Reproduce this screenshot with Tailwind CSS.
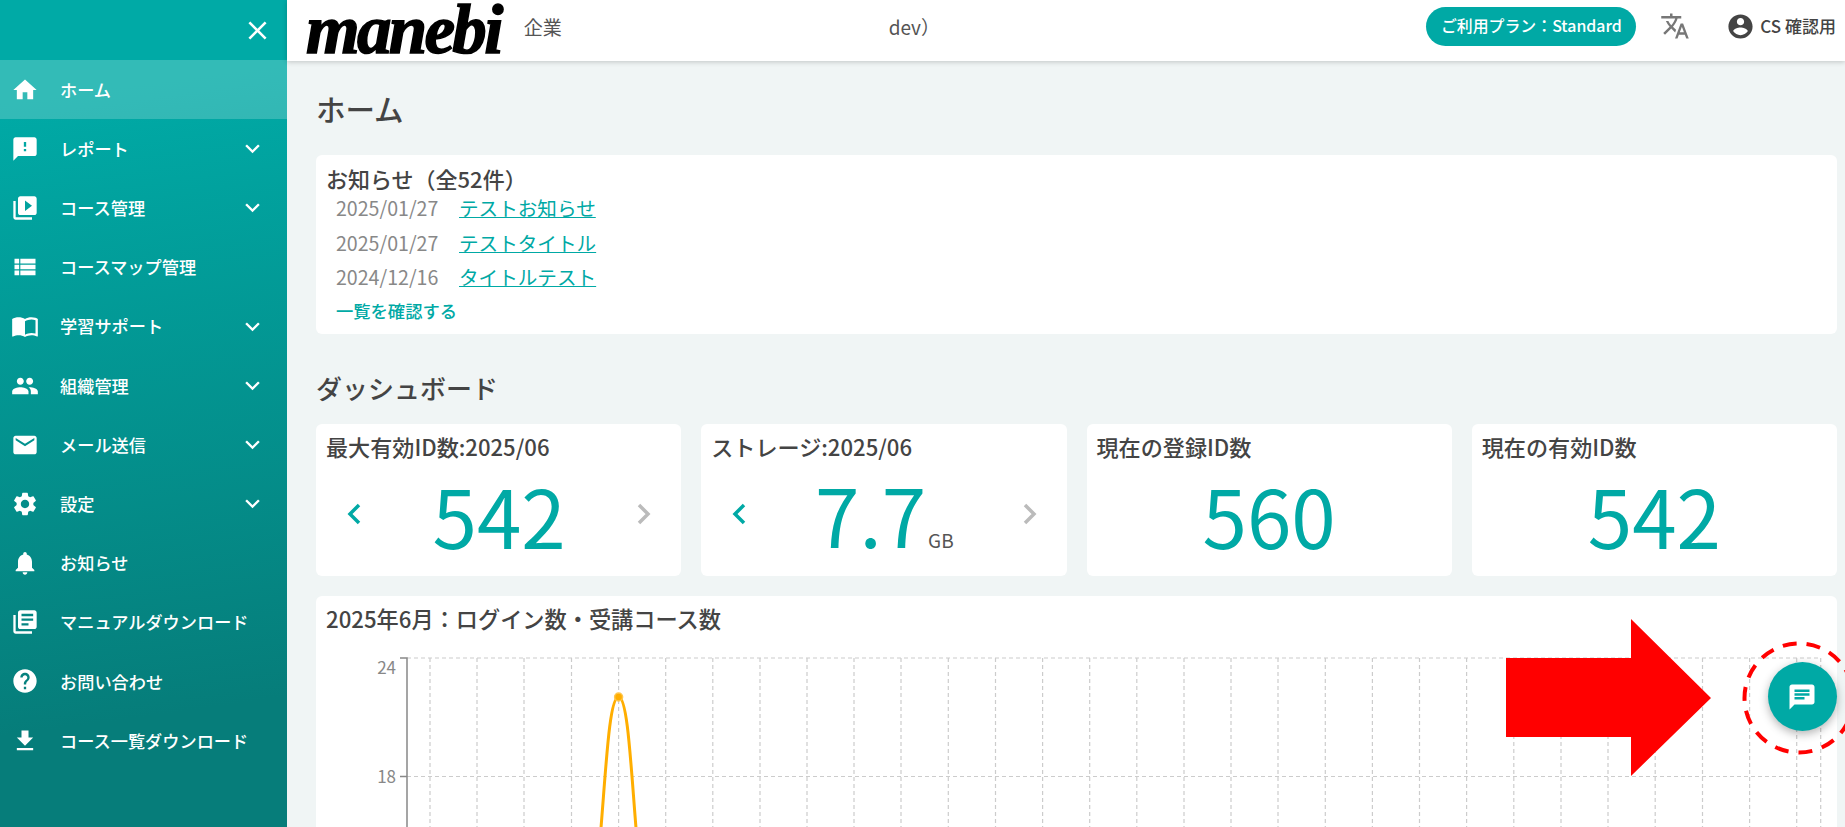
<!DOCTYPE html>
<html lang="ja">
<head>
    <meta charset="UTF-8">
    <title>manebi</title>
    <script src="https://cdn.jsdelivr.net/npm/@tailwindcss/browser@4"></script>
</head>
<body class="font-['Noto_Sans_CJK_JP','Noto_Sans',sans-serif] text-[#444] bg-[#f0f5f5]">
    <div class="flex h-screen overflow-hidden relative">

        <!-- sidebar -->
        <aside class="w-[287px] shrink-0 text-white font-medium text-[17.2px] bg-[linear-gradient(172deg,#00aaa6_12%,#067d7a_85%)]">
            <div class="h-[60px] flex items-center justify-end pr-[14px]">
                <svg class="w-[31px] h-[31px] fill-white" viewBox="0 0 24 24"><path d="M19 6.41L17.59 5 12 10.59 6.41 5 5 6.41 10.59 12 5 17.59 6.41 19 12 13.41 17.59 19 19 17.59 13.41 12 19 6.41z"/></svg>
            </div>
            <nav>
                <a class="flex items-center h-[59.2px] pl-[11px] bg-white/20">
                    <svg class="w-[28px] h-[28px] fill-white mr-[21px]" viewBox="0 0 24 24"><path d="M10 20v-6h4v6h5v-8h3L12 3 2 12h3v8z"/></svg>
                    <span>ホーム</span>
                </a>
                <a class="flex items-center h-[59.2px] pl-[11px]">
                    <svg class="w-[28px] h-[28px] fill-white mr-[21px]" viewBox="0 0 24 24"><path d="M20 2H4c-1.1 0-1.99.9-1.99 2L2 22l4-4h14c1.1 0 2-.9 2-2V4c0-1.1-.9-2-2-2zm-7 12h-2v-2h2v2zm0-4h-2V6h2v4z"/></svg>
                    <span class="flex-1">レポート</span>
                    <svg class="w-[29px] h-[29px] fill-white mr-[20px]" viewBox="0 0 24 24"><path d="M16.59 8.59L12 13.17 7.41 8.59 6 10l6 6 6-6z"/></svg>
                </a>
                <a class="flex items-center h-[59.2px] pl-[11px]">
                    <svg class="w-[28px] h-[28px] fill-white mr-[21px]" viewBox="0 0 24 24"><path d="M4 6H2v14c0 1.1.9 2 2 2h14v-2H4V6zm16-4H8c-1.1 0-2 .9-2 2v12c0 1.1.9 2 2 2h12c1.1 0 2-.9 2-2V4c0-1.1-.9-2-2-2zm-8 12.5v-9l6 4.5-6 4.5z"/></svg>
                    <span class="flex-1">コース管理</span>
                    <svg class="w-[29px] h-[29px] fill-white mr-[20px]" viewBox="0 0 24 24"><path d="M16.59 8.59L12 13.17 7.41 8.59 6 10l6 6 6-6z"/></svg>
                </a>
                <a class="flex items-center h-[59.2px] pl-[11px]">
                    <svg class="w-[28px] h-[28px] fill-white mr-[21px]" viewBox="0 0 24 24"><path d="M3 14h4v-4H3v4zm0 5h4v-4H3v4zM3 9h4V5H3v4zm5 5h13v-4H8v4zm0 5h13v-4H8v4zM8 5v4h13V5H8z"/></svg>
                    <span>コースマップ管理</span>
                </a>
                <a class="flex items-center h-[59.2px] pl-[11px]">
                    <svg class="w-[28px] h-[28px] fill-white mr-[21px]" viewBox="0 0 24 24"><path d="M21 5c-1.11-.35-2.33-.5-3.5-.5-1.95 0-4.05.4-5.5 1.5-1.45-1.1-3.55-1.5-5.5-1.5S2.45 4.9 1 6v14.65c0 .25.25.5.5.5.1 0 .15-.05.25-.05C3.1 20.45 5.05 20 6.5 20c1.95 0 4.05.4 5.5 1.5 1.35-.85 3.8-1.5 5.5-1.5 1.65 0 3.35.3 4.75 1.05.1.05.15.05.25.05.25 0 .5-.25.5-.5V6c-.6-.45-1.25-.75-2-1zm0 13.5c-1.1-.35-2.3-.5-3.5-.5-1.7 0-4.15.65-5.5 1.5V8c1.35-.85 3.8-1.5 5.5-1.5 1.2 0 2.4.15 3.5.5v11.5z"/></svg>
                    <span class="flex-1">学習サポート</span>
                    <svg class="w-[29px] h-[29px] fill-white mr-[20px]" viewBox="0 0 24 24"><path d="M16.59 8.59L12 13.17 7.41 8.59 6 10l6 6 6-6z"/></svg>
                </a>
                <a class="flex items-center h-[59.2px] pl-[11px]">
                    <svg class="w-[28px] h-[28px] fill-white mr-[21px]" viewBox="0 0 24 24"><path d="M16 11c1.66 0 2.99-1.34 2.99-3S17.66 5 16 5c-1.66 0-3 1.34-3 3s1.34 3 3 3zm-8 0c1.66 0 2.99-1.34 2.99-3S9.66 5 8 5C6.34 5 5 6.34 5 8s1.34 3 3 3zm0 2c-2.33 0-7 1.17-7 3.5V19h14v-2.5c0-2.33-4.67-3.5-7-3.5zm8 0c-.29 0-.62.02-.97.05 1.16.84 1.97 1.97 1.97 3.45V19h6v-2.5c0-2.33-4.67-3.5-7-3.5z"/></svg>
                    <span class="flex-1">組織管理</span>
                    <svg class="w-[29px] h-[29px] fill-white mr-[20px]" viewBox="0 0 24 24"><path d="M16.59 8.59L12 13.17 7.41 8.59 6 10l6 6 6-6z"/></svg>
                </a>
                <a class="flex items-center h-[59.2px] pl-[11px]">
                    <svg class="w-[28px] h-[28px] fill-white mr-[21px]" viewBox="0 0 24 24"><path d="M20 4H4c-1.1 0-1.99.9-1.99 2L2 18c0 1.1.9 2 2 2h16c1.1 0 2-.9 2-2V6c0-1.1-.9-2-2-2zm0 4l-8 5-8-5V6l8 5 8-5v2z"/></svg>
                    <span class="flex-1">メール送信</span>
                    <svg class="w-[29px] h-[29px] fill-white mr-[20px]" viewBox="0 0 24 24"><path d="M16.59 8.59L12 13.17 7.41 8.59 6 10l6 6 6-6z"/></svg>
                </a>
                <a class="flex items-center h-[59.2px] pl-[11px]">
                    <svg class="w-[28px] h-[28px] fill-white mr-[21px]" viewBox="0 0 24 24"><path d="M19.14 12.94c.04-.3.06-.61.06-.94 0-.32-.02-.64-.07-.94l2.03-1.58c.18-.14.23-.41.12-.61l-1.92-3.32c-.12-.22-.37-.29-.59-.22l-2.39.96c-.5-.38-1.03-.7-1.62-.94l-.36-2.54c-.04-.24-.24-.41-.48-.41h-3.84c-.24 0-.43.17-.47.41l-.36 2.54c-.59.24-1.13.57-1.62.94l-2.39-.96c-.22-.08-.47 0-.59.22L2.74 8.87c-.12.21-.08.47.12.61l2.03 1.58c-.05.3-.09.63-.09.94s.02.64.07.94l-2.03 1.58c-.18.14-.23.41-.12.61l1.92 3.32c.12.22.37.29.59.22l2.39-.96c.5.38 1.03.7 1.62.94l.36 2.54c.05.24.24.41.48.41h3.84c.24 0 .44-.17.47-.41l.36-2.54c.59-.24 1.13-.56 1.62-.94l2.39.96c.22.08.47 0 .59-.22l1.92-3.32c.12-.22.07-.47-.12-.61l-2.01-1.58zM12 15.6c-1.98 0-3.6-1.62-3.6-3.6s1.62-3.6 3.6-3.6 3.6 1.62 3.6 3.6-1.62 3.6-3.6 3.6z"/></svg>
                    <span class="flex-1">設定</span>
                    <svg class="w-[29px] h-[29px] fill-white mr-[20px]" viewBox="0 0 24 24"><path d="M16.59 8.59L12 13.17 7.41 8.59 6 10l6 6 6-6z"/></svg>
                </a>
                <a class="flex items-center h-[59.2px] pl-[11px]">
                    <svg class="w-[28px] h-[28px] fill-white mr-[21px]" viewBox="0 0 24 24"><path d="M12 22c1.1 0 2-.9 2-2h-4c0 1.1.89 2 2 2zm6-6v-5c0-3.07-1.64-5.64-4.5-6.32V4c0-.83-.67-1.5-1.5-1.5s-1.5.67-1.5 1.5v.68C7.63 5.36 6 7.92 6 11v5l-2 2v1h16v-1l-2-2z"/></svg>
                    <span>お知らせ</span>
                </a>
                <a class="flex items-center h-[59.2px] pl-[11px]">
                    <svg class="w-[28px] h-[28px] fill-white mr-[21px]" viewBox="0 0 24 24"><path d="M4 6H2v14c0 1.1.9 2 2 2h14v-2H4V6zm16-4H8c-1.1 0-2 .9-2 2v12c0 1.1.9 2 2 2h12c1.1 0 2-.9 2-2V4c0-1.1-.9-2-2-2zm-1 9H9V9h10v2zm-4 4H9v-2h6v2zm4-8H9V5h10v2z"/></svg>
                    <span>マニュアルダウンロード</span>
                </a>
                <a class="flex items-center h-[59.2px] pl-[11px]">
                    <svg class="w-[28px] h-[28px] fill-white mr-[21px]" viewBox="0 0 24 24"><path d="M12 2C6.48 2 2 6.48 2 12s4.48 10 10 10 10-4.48 10-10S17.52 2 12 2zm1 17h-2v-2h2v2zm2.07-7.75l-.9.92C13.45 12.9 13 13.5 13 15h-2v-.5c0-1.1.45-2.1 1.17-2.83l1.24-1.26c.37-.36.59-.86.59-1.41 0-1.1-.9-2-2-2s-2 .9-2 2H8c0-2.21 1.79-4 4-4s4 1.79 4 4c0 .88-.36 1.68-.93 2.25z"/></svg>
                    <span>お問い合わせ</span>
                </a>
                <a class="flex items-center h-[59.2px] pl-[11px]">
                    <svg class="w-[28px] h-[28px] fill-white mr-[21px]" viewBox="0 0 24 24"><path d="M19 9h-4V3H9v6H5l7 7 7-7zM5 18v2h14v-2H5z"/></svg>
                    <span>コース一覧ダウンロード</span>
                </a>
            </nav>
        </aside>

        <div class="flex-1 flex flex-col min-w-0">
            <!-- header -->
            <header class="h-[61px] shrink-0 bg-white shadow-[0_1px_5px_rgba(0,0,0,0.2)] flex items-center relative z-10">
                <span class="font-['Liberation_Serif',serif] font-bold italic text-[69px] leading-[58px] tracking-[-2.7px] text-black ml-[19px] -mt-[2px] [-webkit-text-stroke:1.5px_black]">manebi</span>
                <span class="text-[19px] text-[#555] ml-[23px] -mt-[6px]">企業</span>
                <span class="text-[19px] text-[#555] ml-[327px] -mt-[6px]">dev）</span>
                <div class="ml-auto flex items-center -mt-[9px]">
                    <span class="h-[39px] px-[14.5px] rounded-full bg-[#00a9a5] text-white text-[15.9px] font-medium flex items-center">ご利用プラン：Standard</span>
                    <svg class="w-[30px] h-[30px] fill-[#777] ml-[24px]" viewBox="0 0 24 24"><path d="M12.87 15.07l-2.54-2.51.03-.03c1.74-1.94 2.98-4.17 3.71-6.53H17V4h-7V2H8v2H1v1.99h11.17C11.5 7.92 10.44 9.75 9 11.35 8.07 10.32 7.3 9.19 6.69 8h-2c.73 1.63 1.73 3.17 2.98 4.56l-5.09 5.02L4 19l5-5 3.11 3.11.76-2.04zM18.5 10h-2L12 22h2l1.12-3h4.75L21 22h2l-4.5-12zm-2.62 7l1.62-4.33L19.12 17h-3.24z"/></svg>
                    <svg class="w-[29px] h-[29px] fill-[#444] ml-[36px]" viewBox="0 0 24 24"><path d="M12 2C6.48 2 2 6.48 2 12s4.48 10 10 10 10-4.48 10-10S17.52 2 12 2zm0 3c1.66 0 3 1.34 3 3s-1.34 3-3 3-3-1.34-3-3 1.34-3 3-3zm0 14.2c-2.5 0-4.71-1.28-6-3.22.03-1.99 4-3.08 6-3.08 1.99 0 5.97 1.09 6 3.08-1.29 1.94-3.5 3.22-6 3.22z"/></svg>
                    <span class="text-[17px] font-medium text-[#444] ml-[5px] mr-[9px]">CS 確認用</span>
                </div>
            </header>

            <main class="flex-1 overflow-hidden pl-[29px] pr-[8px]">
                <h1 class="text-[29.5px] font-medium leading-[40px] mt-[27px] mb-[27px]">ホーム</h1>

                <section class="bg-white rounded-md h-[179px] pt-[8px] pl-[10px]">
                    <h2 class="text-[22px] font-medium leading-[30px] -mb-[2px]">お知らせ（全52件）</h2>
                    <div class="pl-[10px] text-[19.6px]">
                        <div class="flex h-[34.3px] items-center"><span class="text-[#888] w-[123px]">2025/01/27</span><a class="text-[#00a9a5] underline">テストお知らせ</a></div>
                        <div class="flex h-[34.3px] items-center"><span class="text-[#888] w-[123px]">2025/01/27</span><a class="text-[#00a9a5] underline">テストタイトル</a></div>
                        <div class="flex h-[34.3px] items-center"><span class="text-[#888] w-[123px]">2024/12/16</span><a class="text-[#00a9a5] underline">タイトルテスト</a></div>
                        <a class="block text-[17.3px] font-medium text-[#00a9a5] leading-[24px] mt-[5px]">一覧を確認する</a>
                    </div>
                </section>

                <h2 class="text-[26px] font-medium leading-[36px] mt-[36px] mb-[18px]">ダッシュボード</h2>

                <div class="grid grid-cols-4 gap-[20px]">
                    <div class="bg-white rounded-md h-[152px] pt-[7px]">
                        <h3 class="text-[22.1px] font-medium leading-[30px] pl-[10px]">最大有効ID数:2025/06</h3>
                        <div class="flex items-center justify-between pl-[31px] pr-[30px] h-[100px] mt-[8px]">
                            <svg class="w-[14px] h-[22px] mb-[10px] fill-none stroke-[#00a9a5] stroke-[3.5]" viewBox="0 0 14 22"><path d="M12 2L3 11l9 9"/></svg>
                            <span class="text-[80px] text-[#00a9a5] leading-none mb-[11px]">542</span>
                            <svg class="w-[14px] h-[22px] mb-[10px] fill-none stroke-[#bbb] stroke-[3.5]" viewBox="0 0 14 22"><path d="M2 2l9 9-9 9"/></svg>
                        </div>
                    </div>
                    <div class="bg-white rounded-md h-[152px] pt-[7px]">
                        <h3 class="text-[22.1px] font-medium leading-[30px] pl-[10px]">ストレージ:2025/06</h3>
                        <div class="flex items-center justify-between pl-[31px] pr-[30px] h-[100px] mt-[8px]">
                            <svg class="w-[14px] h-[22px] mb-[10px] fill-none stroke-[#00a9a5] stroke-[3.5]" viewBox="0 0 14 22"><path d="M12 2L3 11l9 9"/></svg>
                            <span class="flex items-baseline mb-[11px]"><span class="text-[80px] text-[#00a9a5] leading-none">7.7</span><span class="text-[19px] text-[#555] ml-[2px]">GB</span></span>
                            <svg class="w-[14px] h-[22px] mb-[10px] fill-none stroke-[#bbb] stroke-[3.5]" viewBox="0 0 14 22"><path d="M2 2l9 9-9 9"/></svg>
                        </div>
                    </div>
                    <div class="bg-white rounded-md h-[152px] pt-[7px]">
                        <h3 class="text-[22.1px] font-medium leading-[30px] pl-[10px]">現在の登録ID数</h3>
                        <div class="flex items-center justify-center h-[100px] mt-[8px]">
                            <span class="text-[80px] text-[#00a9a5] leading-none mb-[11px]">560</span>
                        </div>
                    </div>
                    <div class="bg-white rounded-md h-[152px] pt-[7px]">
                        <h3 class="text-[22.1px] font-medium leading-[30px] pl-[10px]">現在の有効ID数</h3>
                        <div class="flex items-center justify-center h-[100px] mt-[8px]">
                            <span class="text-[80px] text-[#00a9a5] leading-none mb-[11px]">542</span>
                        </div>
                    </div>
                </div>

                <section class="bg-white rounded-t-md mt-[20px] h-[400px] pt-[7px]">
                    <h3 class="text-[22.2px] font-medium leading-[30px] pl-[10px]">2025年6月：ログイン数・受講コース数</h3>
                    <!-- viewBox uses page coordinates so grid values read off the picture directly -->
                    <svg class="block mt-[17px] w-[1521px] h-[200px]" viewBox="316 650 1521 200">
                        <path fill="none" stroke="#ccc" stroke-width="1.2" stroke-dasharray="4 3" d="M407 658H1821M407 776.5H1821M430 658V850M477 658V850M524 658V850M571.5 658V850M618.6 658V850M665.7 658V850M712.8 658V850M760 658V850M807 658V850M854 658V850M901 658V850M948.3 658V850M995.5 658V850M1042.6 658V850M1089.7 658V850M1136.8 658V850M1184 658V850M1231 658V850M1278 658V850M1325.3 658V850M1372.4 658V850M1419.5 658V850M1466.6 658V850M1513.8 658V850M1561 658V850M1608 658V850M1655.2 658V850M1702.5 658V850M1749.6 658V850M1796.7 658V850M1820.7 658V850"/>
                        <path fill="none" stroke="#888" stroke-width="1.5" d="M400 658H407V850M400 776.5H407"/>
                        <text x="396" y="674" text-anchor="end" font-size="17" fill="#888">24</text>
                        <text x="396" y="783" text-anchor="end" font-size="17" fill="#888">18</text>
                        <path fill="none" stroke="#ffae00" stroke-width="3" d="M600 840C606 770 609 697 618.6 697C628 697 631 770 637 840"/>
                        <circle cx="618.6" cy="697" r="4" fill="#ffae00" stroke="#ffc64d" stroke-width="1.5"/>
                    </svg>
                </section>
            </main>
        </div>

        <!-- red annotation and chat button sit over the chart -->
        <svg class="absolute left-[1500px] top-[610px] w-[345px] h-[175px] pointer-events-none z-20" viewBox="1500 610 345 175">
            <path fill="#f00" d="M1506 658H1631V619L1711 698L1631 776V737H1506z"/>
        </svg>
        <button class="absolute left-[1767.5px] top-[662px] w-[69px] h-[69px] rounded-full bg-[#00a9a5] shadow-[0_3px_10px_rgba(0,0,0,0.3)] flex items-center justify-center z-20">
            <svg class="w-[30px] h-[30px] fill-white" viewBox="0 0 24 24"><path d="M20 2H4c-1.1 0-1.99.9-1.99 2L2 22l4-4h14c1.1 0 2-.9 2-2V4c0-1.1-.9-2-2-2zM6 9h12v2H6V9zm8 5H6v-2h8v2zm4-6H6V6h12v2z"/></svg>
        </button>
        <svg class="absolute left-[1740px] top-[638px] w-[105px] h-[120px] pointer-events-none z-30" viewBox="1740 638 105 120">
            <circle cx="1799" cy="698" r="54.5" fill="none" stroke="#f00" stroke-width="4" stroke-dasharray="14 10"/>
        </svg>
    </div>
</body>
</html>
